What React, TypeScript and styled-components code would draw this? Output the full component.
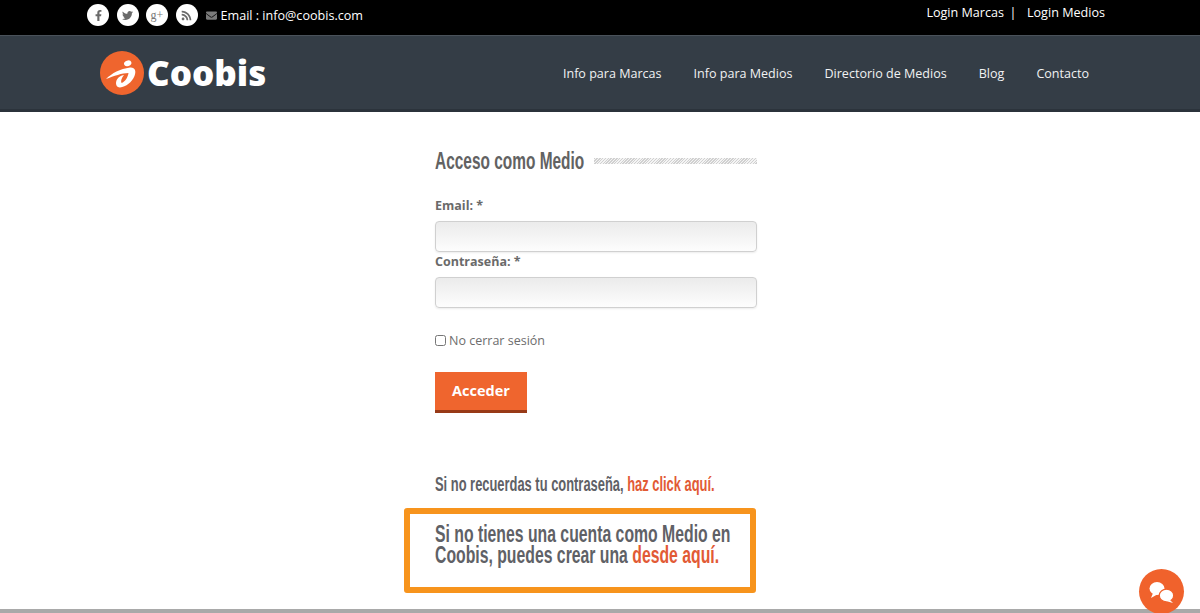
import React from "react";
import styled, { createGlobalStyle } from "styled-components";
import { FaFacebookF, FaTwitter, FaRss, FaEnvelope } from "react-icons/fa";

const GlobalStyle = createGlobalStyle`
  html, body {
    margin: 0;
    padding: 0;
    height: 100%;
    background: #fff;
    overflow: hidden;
  }
  body {
    font-family: "Open Sans", "Liberation Sans", sans-serif;
  }
  * {
    box-sizing: border-box;
  }
`;

const Page = styled.div`
  height: 613px;
  display: flex;
  flex-direction: column;
  position: relative;
`;

const TopBar = styled.div`
  height: 35px;
  background: #000;
  display: flex;
  justify-content: space-between;
  padding: 2px 95px 0 87px;
  color: #fff;
  font-size: 12.6px;
`;

const TopLeft = styled.div`
  display: flex;
  align-items: center;
  height: 26px;
`;

const SocialList = styled.div`
  display: flex;
  gap: 7.5px;
  margin-right: 8px;
`;

const SocialIcon = styled.a`
  width: 22px;
  height: 22px;
  border-radius: 50%;
  background: #fff;
  color: #6a6a6a;
  display: flex;
  align-items: center;
  justify-content: center;
  font-size: 11px;
`;

const GooglePlusGlyph = styled.span`
  font-family: "Liberation Serif", serif;
  font-size: 12px;
  line-height: 1;
  color: #777;
`;

const MailLine = styled.div`
  display: flex;
  align-items: center;
  gap: 4px;
  svg {
    color: #7a7a7a;
    font-size: 11px;
  }
`;

const LoginLinks = styled.div`
  display: flex;
  height: 20px;
  align-items: center;
`;

const LoginDivider = styled.span`
  margin: 0 10.5px 0 5.5px;
`;

const NavBar = styled.div`
  height: 77px;
  background: #343d46;
  border-top: 1px solid #4a525a;
  border-bottom: 3px solid #2b333b;
  display: flex;
  align-items: center;
  justify-content: space-between;
  padding: 0 111px 0 100px;
`;

const Logo = styled.div`
  display: flex;
  align-items: center;
  gap: 4px;
`;

const LogoText = styled.span`
  font-weight: 800;
  font-size: 35px;
  line-height: 44px;
  color: #fff;
  margin-left: -1px;
`;

const Menu = styled.nav`
  display: flex;
  gap: 32px;
  padding-top: 2px;
  color: #f1f2f3;
  font-size: 12.55px;
`;

const Main = styled.main`
  flex: 1;
  display: flex;
  flex-direction: column;
  padding: 36px 0 0 435px;
  color: #616161;
`;

const TitleRow = styled.div`
  display: flex;
  align-items: center;
  gap: 10px;
  width: 322px;
  height: 26px;
`;

// no condensed family is installed, so the narrow headline face is squeezed
const CondensedText = styled.span`
  display: block;
  font-family: "Liberation Sans", sans-serif;
  font-weight: 700;
  white-space: nowrap;
  transform-origin: left center;
`;

const Title = styled(CondensedText)`
  flex: 0 0 149px;
  min-width: 0;
  width: 149px;
  font-size: 24px;
  line-height: 26px;
  color: #626262;
  transform: scaleX(0.643);
`;

const TitleRule = styled.div`
  flex: 1;
  height: 6px;
  background: repeating-linear-gradient(135deg, #d0d0d0 0 1px, #f4f4f4 1px 2px);
`;

const FieldLabel = styled.label`
  display: block;
  font-size: 12.5px;
  font-weight: 700;
  line-height: 18px;
  color: #6a6a6a;
`;

const FirstLabel = styled(FieldLabel)`
  margin-top: 23px;
  margin-bottom: 6px;
`;

const SecondLabel = styled(FieldLabel)`
  margin-top: 1px;
  margin-bottom: 6px;
`;

const TextInput = styled.input`
  display: block;
  width: 322px;
  height: 31px;
  border: 1px solid #d0d0d0;
  border-radius: 4px;
  background: linear-gradient(#ebebeb, #fdfdfd);
  box-shadow: 0 1px 2px rgba(0, 0, 0, 0.08);
  outline: none;
`;

const RememberRow = styled.label`
  display: flex;
  align-items: center;
  gap: 3px;
  margin-top: 22px;
  height: 20px;
  font-size: 12.5px;
  color: #6d6d6d;
`;

const RememberBox = styled.input`
  width: 11px;
  height: 11px;
  margin: 1px 0 0 0;
`;

const SubmitButton = styled.button`
  margin-top: 22px;
  width: 92px;
  height: 41px;
  border: none;
  border-bottom: 3px solid #983a17;
  background: #ef652e;
  color: #fff;
  font-family: "Open Sans", sans-serif;
  font-weight: 700;
  font-size: 14.5px;
  padding: 0 0 2px;
`;

const ForgotLine = styled(CondensedText)`
  margin-top: 60px;
  font-size: 20px;
  line-height: 22px;
  color: #5f6166;
  transform: scaleX(0.645);
`;

const Accent = styled.a`
  color: #e25a35;
`;

const SignupBox = styled.div`
  margin: 13px 0 0 -31px;
  width: 352px;
  height: 85px;
  border: 6px solid #f7941d;
  border-radius: 3px;
  padding: 10px 0 0 25px;
`;

const SignupText = styled(CondensedText)`
  font-size: 23px;
  line-height: 21px;
  color: #5f6166;
  transform: scaleX(0.686);
`;

const FooterLine = styled.div`
  position: absolute;
  left: 0;
  right: 0;
  bottom: 0;
  height: 4px;
  background: #a9a9a9;
`;

const ChatBubble = styled.div`
  position: absolute;
  left: 1139px;
  top: 569px;
  width: 45px;
  height: 45px;
  border-radius: 50%;
  background: #f0622c;
  display: flex;
  align-items: center;
  justify-content: center;
`;

function LogoMark() {
  return (
    <svg width="44" height="44" viewBox="0 0 44 44">
      <circle cx="22" cy="22" r="22" fill="#ef652e" />
      <ellipse cx="27.7" cy="12.3" rx="3.8" ry="2.8" fill="#fff" transform="rotate(-20 27.7 12.3)" />
      <path
        d="M6 28C12 22 20 18 30 16.5C35 16 36.5 20 34.5 25C32 31 26 36 20 36.5C16 36.5 15 32 17 28.5C18.5 26 21 24.5 24 24C21.5 27 20.5 30 21.5 32C25 31 28 26 28.5 22C22 22 14 25 6 28Z"
        fill="#fff"
      />
    </svg>
  );
}

function ChatIcon() {
  return (
    <svg width="30" height="24" viewBox="0 0 30 24" fill="#fff">
      <ellipse cx="10" cy="8.5" rx="7.5" ry="6.5" />
      <path d="M6 13L4 18L11 14Z" />
      <ellipse cx="19.5" cy="15.5" rx="7.2" ry="6.3" stroke="#f0622c" strokeWidth="1.2" />
      <path d="M23 20L26 23L19 21Z" />
    </svg>
  );
}

export default function App() {
  return (
    <Page>
      <GlobalStyle />
      <TopBar>
        <TopLeft>
          <SocialList>
            <SocialIcon><FaFacebookF /></SocialIcon>
            <SocialIcon><FaTwitter /></SocialIcon>
            <SocialIcon><GooglePlusGlyph>g+</GooglePlusGlyph></SocialIcon>
            <SocialIcon><FaRss /></SocialIcon>
          </SocialList>
          <MailLine>
            <FaEnvelope />
            <span>Email : info@coobis.com</span>
          </MailLine>
        </TopLeft>
        <LoginLinks>
          <span>Login Marcas</span>
          <LoginDivider>|</LoginDivider>
          <span>Login Medios</span>
        </LoginLinks>
      </TopBar>
      <NavBar>
        <Logo>
          <LogoMark />
          <LogoText>Coobis</LogoText>
        </Logo>
        <Menu>
          <span>Info para Marcas</span>
          <span>Info para Medios</span>
          <span>Directorio de Medios</span>
          <span>Blog</span>
          <span>Contacto</span>
        </Menu>
      </NavBar>
      <Main>
        <TitleRow>
          <Title>Acceso como Medio</Title>
          <TitleRule />
        </TitleRow>
        <FirstLabel>Email: *</FirstLabel>
        <TextInput type="text" />
        <SecondLabel>Contraseña: *</SecondLabel>
        <TextInput type="password" />
        <RememberRow>
          <RememberBox type="checkbox" />
          No cerrar sesión
        </RememberRow>
        <SubmitButton>Acceder</SubmitButton>
        <ForgotLine>
          Si no recuerdas tu contraseña, <Accent>haz click aquí.</Accent>
        </ForgotLine>
        <SignupBox>
          <SignupText>
            Si no tienes una cuenta como Medio en
            <br />
            Coobis, puedes crear una <Accent>desde aquí.</Accent>
          </SignupText>
        </SignupBox>
      </Main>
      <FooterLine />
      <ChatBubble>
        <ChatIcon />
      </ChatBubble>
    </Page>
  );
}
